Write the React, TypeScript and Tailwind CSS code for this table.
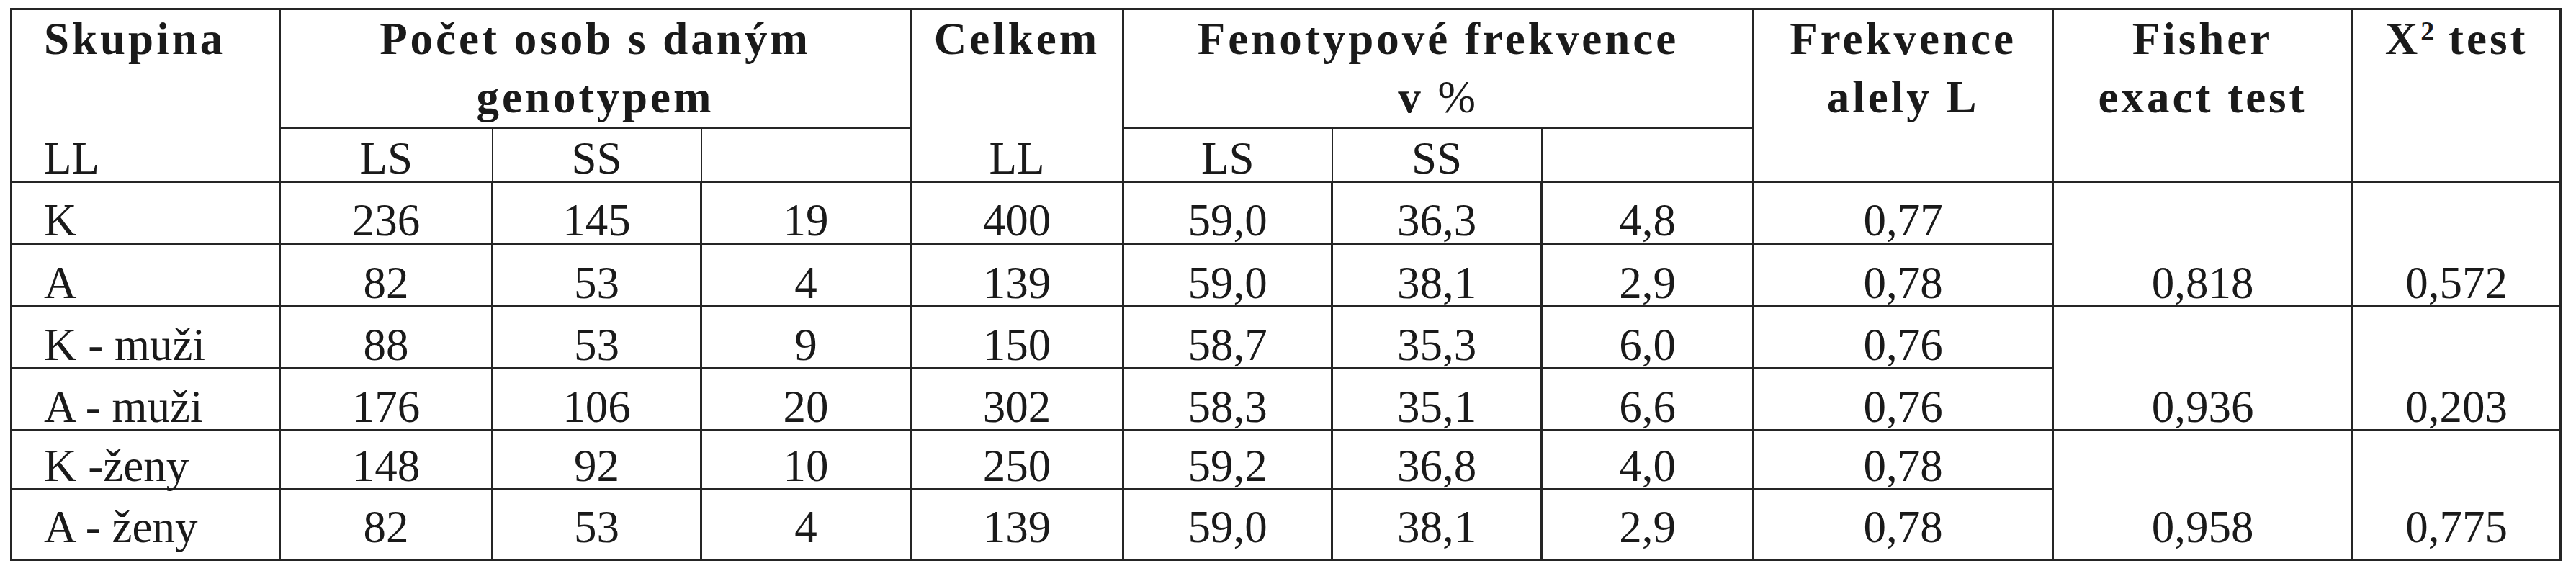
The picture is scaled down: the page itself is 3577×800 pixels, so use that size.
import React from "react";

interface Row {
  group: string;
  counts: string[];
  total: string;
  freqs: string[];
  allele: string;
  height: string;
  pad: string;
}

const rows: Row[] = [
  { group: "K", counts: ["236", "145", "19"], total: "400", freqs: ["59,0", "36,3", "4,8"], allele: "0,77", height: "h-[86px]", pad: "pb-0" },
  { group: "A", counts: ["82", "53", "4"], total: "139", freqs: ["59,0", "38,1", "2,9"], allele: "0,78", height: "h-[87px]", pad: "pb-0" },
  { group: "K - muži", counts: ["88", "53", "9"], total: "150", freqs: ["58,7", "35,3", "6,0"], allele: "0,76", height: "h-[86px]", pad: "pb-0" },
  { group: "A - muži", counts: ["176", "106", "20"], total: "302", freqs: ["58,3", "35,1", "6,6"], allele: "0,76", height: "h-[86px]", pad: "pb-0" },
  { group: "K -ženy", counts: ["148", "92", "10"], total: "250", freqs: ["59,2", "36,8", "4,0"], allele: "0,78", height: "h-[82px]", pad: "pb-0" },
  { group: "A - ženy", counts: ["82", "53", "4"], total: "139", freqs: ["59,0", "38,1", "2,9"], allele: "0,78", height: "h-[98px]", pad: "pb-[13px]" },
];

// Fisher / X² hodnoty pro dvojice řádků
const tests = [
  { fisher: "0,818", chi: "0,572" },
  { fisher: "0,936", chi: "0,203" },
  { fisher: "0,958", chi: "0,775" },
];

const widths = [373, 295, 290, 291, 295, 290, 291, 294, 416, 416, 289];

export default function App() {
  const cell = "border-[3px] border-[#252525] align-bottom text-center leading-[62px] p-0";
  const head = "border-[3px] border-[#252525] align-top text-center font-bold tracking-[4px] leading-[81px] p-0";

  return (
    <div className="w-[3577px] h-[800px] bg-white overflow-hidden text-[#1a1a1a] [font-family:'Liberation_Serif','Times_New_Roman',serif] text-[63px]">
      <table className="table-fixed border-collapse ml-[14px] mt-[11px] w-[3543px]">
        <colgroup>
          {widths.map((w, i) => (
            <col key={i} style={{ width: w }} />
          ))}
        </colgroup>
        <thead>
          <tr>
            <th className={`${head} h-[164px] border-b-0 text-left pl-[44px]`}>Skupina</th>
            <th colSpan={3} className={head}>
              Počet osob s daným
              <br />
              genotypem
            </th>
            <th className={`${head} border-b-0`}>Celkem</th>
            <th colSpan={3} className={head}>
              Fenotypové frekvence
              <br />v <span className="font-normal">%</span>
            </th>
            <th rowSpan={2} className={head}>
              Frekvence
              <br />
              alely L
            </th>
            <th rowSpan={2} className={head}>
              Fisher
              <br />
              exact test
            </th>
            <th rowSpan={2} className={head}>
              X<sup className="text-[38px] tracking-normal">2</sup> test
            </th>
          </tr>
          <tr>
            <td className={`${cell} h-[75px] border-t-0 text-left pl-[44px]`}>LL</td>
            <td className={`${cell} border-x-2`}>LS</td>
            <td className={`${cell} border-x-2`}>SS</td>
            <td className={`${cell} border-x-2`}></td>
            <td className={`${cell} border-t-0`}>LL</td>
            <td className={`${cell} border-x-2`}>LS</td>
            <td className={`${cell} border-x-2`}>SS</td>
            <td className={`${cell} border-x-2`}></td>
          </tr>
        </thead>
        <tbody>
          {rows.map((r, i) => (
            <tr key={r.group + i}>
              <td className={`${cell} ${r.height} ${r.pad} text-left pl-[44px]`}>{r.group}</td>
              {r.counts.map((c, j) => (
                <td key={j} className={`${cell} ${r.pad}`}>{c}</td>
              ))}
              <td className={`${cell} ${r.pad}`}>{r.total}</td>
              {r.freqs.map((f, j) => (
                <td key={j} className={`${cell} ${r.pad}`}>{f}</td>
              ))}
              <td className={`${cell} ${r.pad}`}>{r.allele}</td>
              {i % 2 === 0 && (
                <>
                  <td rowSpan={2} className={`${cell} ${rows[i + 1].pad}`}>{tests[i / 2].fisher}</td>
                  <td rowSpan={2} className={`${cell} ${rows[i + 1].pad}`}>{tests[i / 2].chi}</td>
                </>
              )}
            </tr>
          ))}
        </tbody>
      </table>
    </div>
  );
}
